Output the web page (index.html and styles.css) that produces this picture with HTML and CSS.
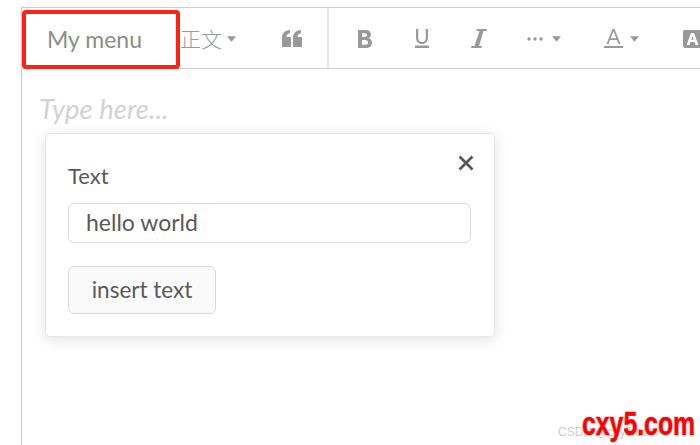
FILE: index.html
```html
<!DOCTYPE html>
<html lang="en">
<head>
<meta charset="utf-8">
<title>Editor</title>
<link rel="stylesheet" href="styles.css">
</head>
<body>
<div class="editor">
  <div class="toolbar">
    <div class="menu-item">My menu</div>
    <div class="heading"><span class="heading-text">正文</span><svg class="caret" viewBox="0 0 8 5"><path d="M0 0h8L4 5z"/></svg></div>
    <div class="tool quote"><svg viewBox="0 0 20 17" width="20" height="17"><path d="M0 17V8.500C0 3 2.500 .5 8 0v3.200C5.500 3.700 4.500 5 4.500 7H9v10zM11 17V8.500C11 3 13.500 .5 19 0v3.200C16.500 3.700 15.500 5 15.500 7H20v10z"/></svg></div>
    <div class="divider"></div>
    <div class="tool t-bold"><svg viewBox="0 0 14 18" width="14" height="18"><path fill-rule="evenodd" d="M0 0h7.500C11 0 13 1.800 13 4.500c0 1.800-1 3.200-2.500 3.800 2 .5 3.500 2 3.500 4.400 0 3.300-2.500 5.300-6 5.300H0zM4 3.200v3.900h3c1.300 0 2-.8 2-2S8.300 3.200 7 3.200zM4 10v4.800h3.300c1.700 0 2.700-.9 2.700-2.400S9 10 7.300 10z"/></svg></div>
    <div class="tool t-under"><svg viewBox="0 0 14 19" width="14" height="19"><path d="M1 0h2.200v8.500c0 3 1.300 4.500 3.800 4.500s3.800-1.500 3.800-4.500V0H13v8.500c0 4.200-2.400 6.500-6 6.500s-6-2.300-6-6.500zM0 16.500h14V19H0z"/></svg></div>
    <div class="tool t-italic"><svg viewBox="0 0 16 19" width="16" height="19"><path d="M6 0h10l-.5 2h-3L8 17h3l-.5 2H0l.5-2h3L8.500 2h-3z"/></svg></div>
    <div class="tool t-more"><svg viewBox="0 0 16 4" width="16" height="4"><circle cx="2" cy="2" r="1.700"/><circle cx="8" cy="2" r="1.700"/><circle cx="14" cy="2" r="1.700"/></svg><svg class="caret" viewBox="0 0 8 5"><path d="M0 0h8L4 5z"/></svg></div>
    <div class="tool t-color"><svg viewBox="0 0 19 19" width="19" height="19"><path fill-rule="evenodd" d="M8.500 0h2l6 15h-2l-1.500-4H6l-1.500 4h-2zM6.700 9.200h5.600L9.500 2.300zM0 17h19v2H0z"/></svg><svg class="caret" viewBox="0 0 8 5"><path d="M0 0h8L4 5z"/></svg></div>
    <div class="tool t-bg"><svg viewBox="0 0 18 18" width="18" height="18"><path fill-rule="evenodd" d="M2 0h16v18H2a2 2 0 0 1-2-2V2a2 2 0 0 1 2-2zM8 3 3.500 15h3l1-3h4l1 3h3L11 3zM8.300 9.800 9.500 6l1.200 3.800z"/></svg></div>
  </div>
  <div class="content">
    <p class="placeholder">Type here...</p>
    <div class="modal">
      <button class="close" aria-label="close"><svg viewBox="0 0 16 16" width="16" height="16"><path d="M1.500 1.500l13 13M14.500 1.500l-13 13"/></svg></button>
      <label class="label">Text</label>
      <div class="input">hello world</div>
      <button class="insert">insert text</button>
    </div>
  </div>
</div>
<div class="highlight"></div>
<div class="mark-small">CSDN @cxy5.com</div>
<div class="mark">cxy5.com</div>
</body>
</html>
```
FILE: styles.css
```css
* { box-sizing: border-box; }
html, body { margin: 0; height: 100%; overflow: hidden; background: #fff; }
body { padding: 7px 0 0 21px; font-family: Lato, "Noto Sans CJK SC", sans-serif; position: relative; color: #595959; }
.editor { width: 700px; height: 438px; border-left: 1px solid #ccc; border-top: 1px solid #ccc; }
.toolbar { height: 61px; padding-top: 1px; border-bottom: 1px solid #ccc; display: flex; align-items: center; fill: #999; color: #999; }
.menu-item { width: 158px; padding: 1px 0 0 25px; font-size: 23px; flex: none; color: #8c8c8c; }
.heading { width: 102px; font-size: 21px; display: flex; align-items: center; gap: 5px; font-family: "Noto Sans CJK SC", sans-serif; font-weight: 300; flex: none; }
.heading-text { padding-bottom: 2px; }
.caret { width: 9px; height: 6px; flex: none; }
.tool { display: flex; align-items: center; flex: none; }
.quote { width: 45px; }
.divider { width: 2px; height: 60px; margin-top: -1px; background: #e6e6e6; flex: none; margin-right: 29px; }
.t-bold { width: 57px; }
.t-under { width: 56px; }
.t-italic { width: 56px; }
.t-more { width: 77px; gap: 9px; }
.t-color { width: 79px; gap: 7px; }
.placeholder { margin: 0; position: absolute; left: 39px; top: 94px; font-size: 27.500px; line-height: 30px; font-style: italic; color: #d2d2d2; }
.modal { position: absolute; left: 45px; top: 133px; width: 450px; height: 204px; padding: 29px 22px 0; background: #fff; border: 1px solid #e8e8e8; border-radius: 4px; box-shadow: 0 3px 14px rgba(0,0,0,.12); }
.close { position: absolute; top: 21px; left: 412px; padding: 0; border: 0; background: none; height: 16px; width: 16px; }
.close svg { stroke: #595959; stroke-width: 2.800; fill: none; display: block; }
.label { display: block; font-size: 22px; line-height: 26px; color: #595959; }
.input { width: 403px; height: 40px; margin-top: 14px; padding-left: 17px; border: 1px solid #d9d9d9; border-radius: 6px; font-size: 23px; line-height: 37px; color: #595959; }
.insert { display: block; width: 148px; height: 48px; margin-top: 23px; padding: 0 0 1px; background: #fafafa; border: 1px solid #d9d9d9; border-radius: 6px; font: 22.500px Lato, sans-serif; color: #595959; }
.highlight { position: absolute; left: 22px; top: 10px; width: 158px; height: 59px; border: 4px solid #ff2116; border-radius: 4px; }
.mark-small { position: absolute; left: 558px; top: 425px; font: 12px "Liberation Sans", sans-serif; color: #ccc; }
.mark { position: absolute; left: 582px; top: 404px; font: bold 34px/38px "Liberation Sans", sans-serif; color: #f00; transform: scaleX(.73); transform-origin: left top; -webkit-text-stroke: 0.6px #f00; }
```
